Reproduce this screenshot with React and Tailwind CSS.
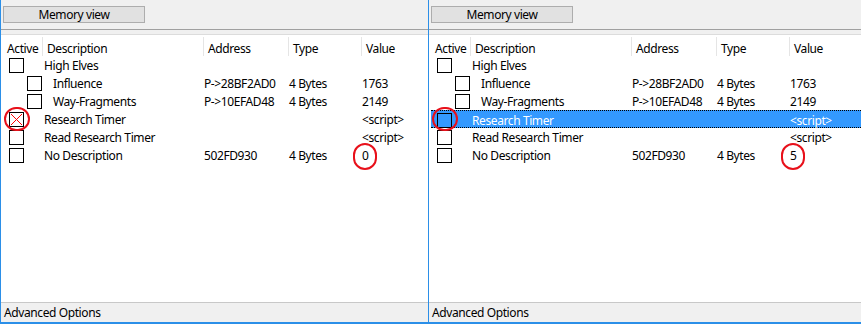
import React from 'react';

const rows = [
  { desc: 'High Elves', indent: false, address: '', type: '', value: '' },
  { desc: 'Influence', indent: true, address: 'P->28BF2AD0', type: '4 Bytes', value: '1763' },
  { desc: 'Way-Fragments', indent: true, address: 'P->10EFAD48', type: '4 Bytes', value: '2149' },
  { desc: 'Research Timer', indent: false, address: '', type: '', value: '<script>', timer: true },
  { desc: 'Read Research Timer', indent: false, address: '', type: '', value: '<script>' },
  { desc: 'No Description', indent: false, address: '502FD930', type: '4 Bytes', value: 'NUM' },
];

function Checkbox({ indent, crossed, selected }) {
  let margin = indent ? 'ml-[26px]' : 'ml-[8px]';
  if (selected) margin = 'ml-[6px]';
  return (
    <div
      className={`w-[15px] h-[15px] border border-black shrink-0 relative ${margin} ${selected ? 'bg-[#3399ff]' : 'bg-white'}`}
    >
      {crossed && (
        <svg className="absolute inset-0" width="13" height="13" viewBox="0 0 13 13">
          <line x1="1" y1="1" x2="12" y2="12" stroke="#ff0000" strokeWidth="1" />
          <line x1="12" y1="1" x2="1" y2="12" stroke="#ff0000" strokeWidth="1" />
        </svg>
      )}
    </div>
  );
}

function RedCircle({ className }) {
  return (
    <div className={`absolute rounded-full border-2 border-[#e8101a] pointer-events-none ${className}`} />
  );
}

function Panel({ value, selectedTimer, width }) {
  return (
    <div className={`flex flex-col h-full border-l border-[#2b8fe8] bg-white ${width}`}>
      {/* toolbar */}
      <div className="h-[29px] bg-[#f0f0f0] pt-[6px] pl-[2px] shrink-0">
        <button className="block w-[142px] h-[17px] bg-[#e1e1e1] border border-[#adadad] text-[12px] leading-[15px] text-black">
          Memory view
        </button>
      </div>
      <div className="h-[6px] border-t border-[#a0a0a0] bg-[#f0f0f0] border-b border-b-[#dcdcdc] shrink-0" />

      {/* list */}
      <div className="relative flex-1 bg-white">
        <div className="grid grid-cols-[41px_161px_85px_73px_1fr] h-[21px] items-end text-[12px] text-black">
          <div className="pl-[6px] h-[19px] pt-[4px] leading-[15px]">Active</div>
          <div className="border-l border-[#e5e5e5] pl-[4px] h-[19px] pt-[4px] leading-[15px]">Description</div>
          <div className="border-l border-[#e5e5e5] pl-[4px] h-[19px] pt-[4px] leading-[15px]">Address</div>
          <div className="border-l border-[#e5e5e5] pl-[4px] h-[19px] pt-[4px] leading-[15px]">Type</div>
          <div className="border-l border-[#e5e5e5] pl-[4px] h-[19px] pt-[4px] leading-[15px]">Value</div>
        </div>
        {rows.map((r) => {
          const sel = r.timer && selectedTimer;
          return (
            <div
              key={r.desc}
              className={`grid h-[18px] items-center text-[12px] ${
                sel
                  ? 'grid-cols-[39px_161px_85px_73px_1fr] ml-[2px] bg-[#3399ff] text-white border-y border-dotted border-black'
                  : 'grid-cols-[41px_161px_85px_73px_1fr] text-black'
              }`}
            >
              <div className="flex items-center overflow-visible">
                <Checkbox indent={r.indent} crossed={r.timer && !selectedTimer} selected={sel} />
              </div>
              <div className={`whitespace-nowrap pt-[2px] leading-[16px] ${r.indent ? 'pl-[11px]' : 'pl-[2px]'}`}>{r.desc}</div>
              <div className="pl-[1px] whitespace-nowrap pt-[2px] leading-[16px]">{r.address}</div>
              <div className="pl-[1px] whitespace-nowrap pt-[2px] leading-[16px]">{r.type}</div>
              <div className="pl-[1px] whitespace-nowrap pt-[2px] leading-[16px]">{r.value === 'NUM' ? value : r.value}</div>
            </div>
          );
        })}
        <RedCircle className="left-[3px] top-[72px] w-[26px] h-[24px]" />
        <RedCircle className="left-[352px] top-[108px] w-[24px] h-[27px]" />
      </div>

      {/* bottom bar */}
      <div className="h-[20px] border-t border-[#c8c8c8] bg-[#f0f0f0] pl-[3px] pt-[1px] text-[12px] leading-[18px] text-black shrink-0">
        Advanced Options
      </div>
    </div>
  );
}

export default function App() {
  return (
    <div
      className="w-[861px] h-[324px] flex flex-col overflow-hidden bg-white tracking-[-0.4px]"
      style={{ fontFamily: '"Segoe UI", "Noto Sans", "Liberation Sans", sans-serif' }}
    >
      <div className="flex flex-1 min-h-0">
        <Panel value="0" selectedTimer={false} width="w-[428px]" />
        <Panel value="5" selectedTimer={true} width="w-[433px]" />
      </div>
      <div className="h-[2px] bg-[#2b8fe8] shrink-0" />
    </div>
  );
}
